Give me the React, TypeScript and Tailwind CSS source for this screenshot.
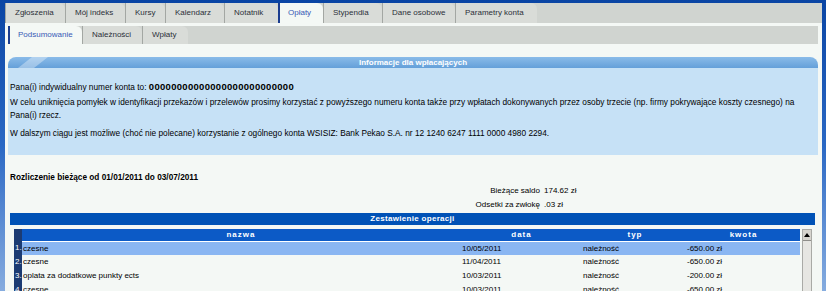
import React from 'react'

const mainTabs = [
    { label: 'Zgłoszenia', w: 'w-[60px]' },
    { label: 'Mój indeks', w: 'w-[60px]' },
    { label: 'Kursy', w: 'w-[40px]' },
    { label: 'Kalendarz', w: 'w-[59px]' },
    { label: 'Notatnik', w: 'w-[54px]' },
    { label: 'Opłaty', w: 'w-[45px]', active: true },
    { label: 'Stypendia', w: 'w-[59px]' },
    { label: 'Dane osobowe', w: 'w-[73px]' },
    { label: 'Parametry konta', w: 'w-[82px]' },
]

const subTabs = [
    { label: 'Podsumowanie', w: 'w-[74px]', active: true },
    { label: 'Należności', w: 'w-[60px]' },
    { label: 'Wpłaty', w: 'w-[46px]' },
]

const operations = [
    { name: 'czesne', date: '10/05/2011', type: 'należność', amount: '-650.00 zł' },
    { name: 'czesne', date: '11/04/2011', type: 'należność', amount: '-650.00 zł' },
    { name: 'oplata za dodatkowe punkty ects', date: '10/03/2011', type: 'należność', amount: '-200.00 zł' },
    { name: 'czesne', date: '10/03/2011', type: 'należność', amount: '-650.00 zł' },
]

function Tab({ label, w, active }: { label: string; w: string; active?: boolean }) {
    if (active) {
        return (
            <div className={`${w} h-full flex items-center pl-[8px] border-l-2 border-[#1b3d8f] bg-[#f4f8f5] text-[#3a5bb5] rounded-tr-[6px]`}>
                {label}
            </div>
        )
    }
    return (
        <div className={`${w} h-full flex items-center pl-[9px] border-l border-[#a3a7a3] bg-[#d9dcd8] text-[#2c3038] rounded-tr-[6px]`}>
            {label}
        </div>
    )
}

export default function App() {
    return (
        <div className="w-[826px] h-[291px] overflow-hidden bg-gradient-to-b from-[#0a45a4] via-[#2a68c4] to-[#86acdf] pt-[3px] pl-[5px] pr-[4px] font-['Liberation_Sans',Arial,sans-serif] text-[8px] text-black">
            <div className="flex flex-col h-full">
                <div className="flex h-[20px] bg-[#d0d4d0] shrink-0">
                    {mainTabs.map((t) => (
                        <Tab key={t.label} {...t} />
                    ))}
                </div>

                <div className="flex-1 bg-[#f4f8f5] pt-[3px] pl-[3px] pr-[4px]">
                    <div className="flex h-[18px] bg-[#d0d4d0]">
                        {subTabs.map((t) => (
                            <Tab key={t.label} {...t} />
                        ))}
                    </div>

                    {/* info box */}
                    <div className="mt-[13px]">
                        <div className="relative h-[11px] rounded-t-[8px] bg-gradient-to-b from-[#8abbe9] to-[#64a0d9] flex items-center justify-center text-white font-bold leading-none">
                            <svg className="absolute left-0 top-0" width="60" height="11" viewBox="0 0 60 11">
                                <polygon points="10,11 24,0 40,0 26,11" fill="rgba(255,255,255,0.35)" />
                            </svg>
                            <span className="relative">Informacje dla wpłacających</span>
                        </div>
                        <div className="bg-[#c6e1f6] pl-[2px] pr-[20px] pt-[12px] pb-[15px] leading-[13px] text-[8.3px]">
                            <div>
                                Pana(i) indywidualny numer konta to:{' '}
                                <b className="text-[9.5px] tracking-[0.3px]">00000000000000000000000000</b>
                            </div>
                            <div className="mt-[2px]">
                                W celu uniknięcia pomyłek w identyfikacji przekazów i przelewów prosimy korzystać z powyższego numeru konta także przy wpłatach dokonywanych przez osoby trzecie (np. firmy pokrywające koszty czesnego) na Pana(i) rzecz.
                            </div>
                            <div className="mt-[5px]">
                                W dalszym ciągu jest możliwe (choć nie polecane) korzystanie z ogólnego konta WSISIZ: Bank Pekao S.A. nr 12 1240 6247 1111 0000 4980 2294.
                            </div>
                        </div>
                    </div>

                    {/* summary */}
                    <div className="mt-[16px] pl-[2px] leading-[13px] font-bold text-[8.25px]">
                        Rozliczenie bieżące od 01/01/2011 do 03/07/2011
                    </div>
                    <div className="grid grid-cols-[532px_1fr] gap-x-[4px] leading-[14px]">
                        <span className="text-right">Bieżące saldo</span>
                        <span>174.62 zł</span>
                        <span className="text-right">Odsetki za zwłokę</span>
                        <span>.03 zł</span>
                    </div>

                    <div className="mt-[1px] ml-[2px] w-[805px] h-[12px] bg-[#0052b6] flex items-center justify-center text-white font-bold tracking-[0.3px]">
                        Zestawienie operacji
                    </div>

                    {/* operations table */}
                    <div className="mt-[4px] ml-[6px] flex">
                        <div className="w-[8px] bg-[#1c3b72] flex flex-col text-white">
                            <div className="h-[12px]" />
                            {operations.map((_, i) => (
                                <div key={i} className="h-[14px] flex items-center pl-[1px]">
                                    {i + 1}.
                                </div>
                            ))}
                        </div>
                        <div className="w-[778px] flex flex-col">
                            <div className="h-[12px] bg-[#0c5ac6] grid grid-cols-[438px_123px_104px_113px] text-white font-bold tracking-[1px] items-center text-center">
                                <span>nazwa</span>
                                <span>data</span>
                                <span>typ</span>
                                <span>kwota</span>
                            </div>
                            {operations.map((op, i) => (
                                <div
                                    key={i}
                                    className={i === 0
                                        ? 'h-[14px] border-t border-white bg-[#8ab6f2] grid grid-cols-[438px_123px_104px_113px] items-center'
                                        : 'h-[14px] grid grid-cols-[438px_123px_104px_113px] items-center'}
                                >
                                    <span className="pl-[1px]">{op.name}</span>
                                    <span className="pl-[2px]">{op.date}</span>
                                    <span>{op.type}</span>
                                    <span>{op.amount}</span>
                                </div>
                            ))}
                        </div>
                        <div className="ml-[2px] w-[10px] h-[80px] bg-[#e6e6e2] border border-[#a9aaa6] flex flex-col">
                            <div className="h-[11px] bg-[#d6d4ce] border-b border-[#8e8e8a] flex items-center justify-center">
                                <svg width="6" height="4" viewBox="0 0 6 4">
                                    <polygon points="0,4 3,0 6,4" fill="#000" />
                                </svg>
                            </div>
                        </div>
                    </div>
                </div>
            </div>
        </div>
    )
}
